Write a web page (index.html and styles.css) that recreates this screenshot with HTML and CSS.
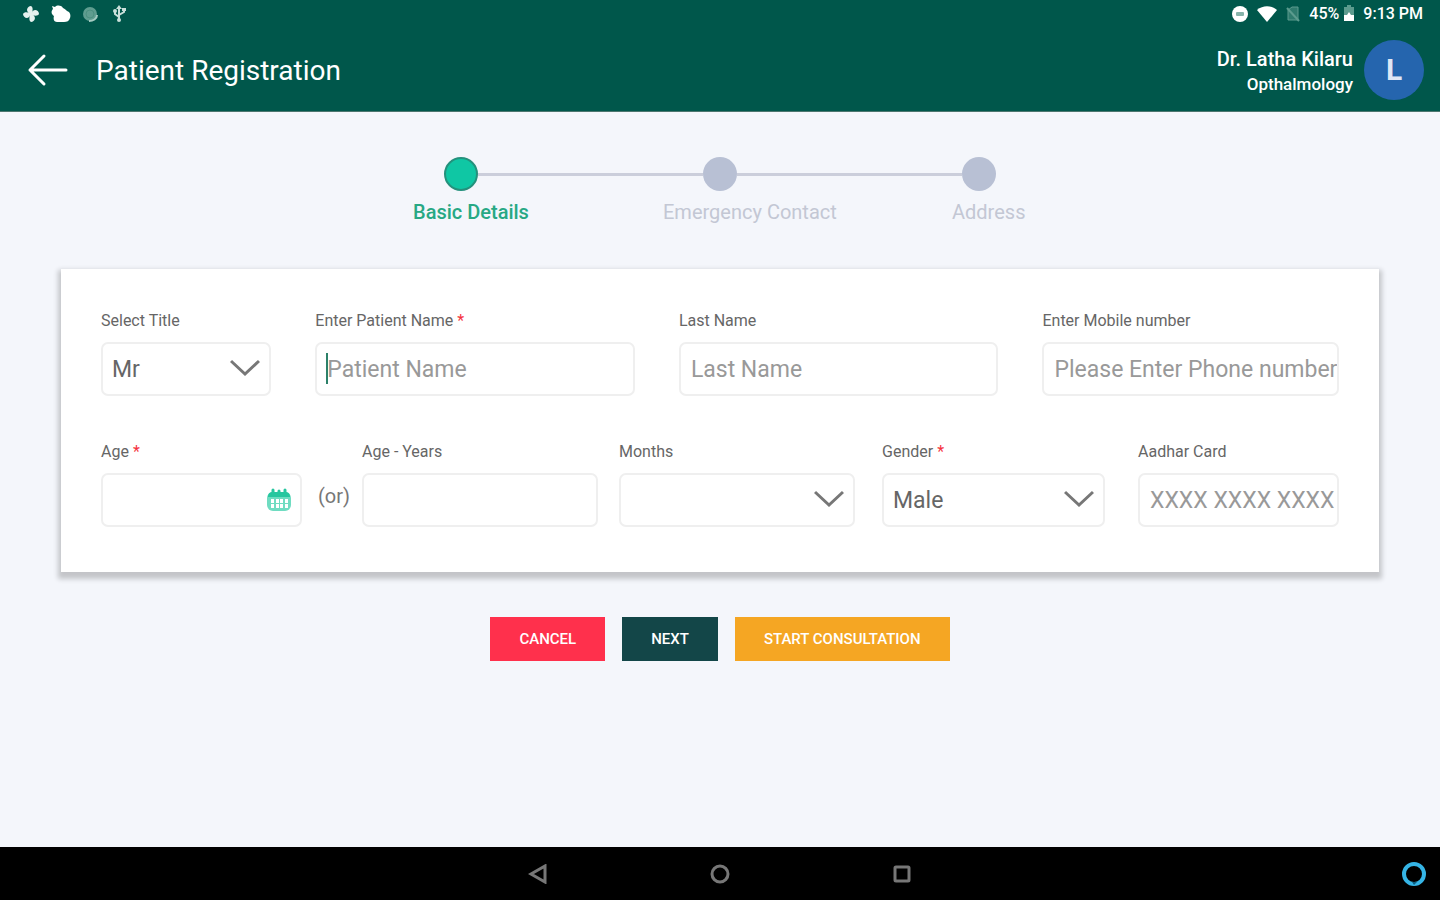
FILE: index.html
```html
<!DOCTYPE html>
<html lang="en">
<head>
    <meta charset="UTF-8">
    <meta name="viewport" content="width=device-width, initial-scale=1.0">
    <title>Patient Registration</title>
    <link rel="stylesheet" href="styles.css">
</head>
<body>
    <header class="header">
        <div class="status-bar">
            <div class="status-left">
                <svg width="18" height="18" viewBox="0 0 18 18" fill="#e6f1ee">
                    <path d="M8 8C3 7 5 1 9 1c2 1 2 4 1 7z M10 8c1-5 7-3 7 1-1 2-4 2-7 1z M10 10c5 1 3 7-1 7-2-1-2-4-1-7z M8 10c-1 5-7 3-7-1 1-2 4-2 7-1z"/>
                    <circle cx="9" cy="9" r="2"/>
                </svg>
                <svg width="20" height="18" viewBox="0 0 20 18" fill="#fff">
                    <path d="M1 1l3 1c2-2 6-2 8 1 2 1 3 2 4 3 3 1 4 4 3 7-1 3-3 4-6 4H6c-3 0-4-3-3-6C0 9 0 6 2 4z"/>
                </svg>
                <svg width="18" height="18" viewBox="0 0 18 18">
                    <circle cx="8" cy="9" r="7" fill="#5f9d90"/>
                    <circle cx="8" cy="9" r="4" fill="none" stroke="#4c9081" stroke-width="1"/>
                    <path d="M15 10c0 4-4 6-8 6" fill="none" stroke="#a5cbc2" stroke-width="2"/>
                </svg>
                <svg width="18" height="18" viewBox="0 0 18 18" fill="none" stroke="#c9dfda" stroke-width="2">
                    <path d="M8 16V3M8 12L4 9V6M8 10l5-3V4"/>
                    <path d="M5 4l3-4 3 4z" fill="#c9dfda" stroke="none"/>
                    <circle cx="8" cy="15" r="2" fill="#c9dfda" stroke="none"/>
                    <circle cx="4" cy="6" r="1"/>
                    <path d="M11 3h4v3h-4z" fill="#c9dfda" stroke="none"/>
                </svg>
            </div>
            <div class="status-right">
                <svg width="18" height="18" viewBox="0 0 18 18">
                    <circle cx="9" cy="9" r="8" fill="#fff"/>
                    <rect x="5" y="7" width="8" height="4" rx="1" fill="#86b3aa"/>
                </svg>
                <svg width="20" height="18" viewBox="0 0 20 18" fill="#fff">
                    <path d="M0 5C6 0 14 0 20 5L10 17z"/>
                </svg>
                <svg width="16" height="18" viewBox="0 0 16 18" fill="none" stroke="#5c9b8e" stroke-width="1">
                    <path d="M3 5l4-3h6v13H3z" fill="#2f7b6e"/>
                    <path d="M2 3l12 13" stroke-width="2"/>
                </svg>
                <div class="battery">
                    <span>45%</span>
                    <svg width="12" height="18" viewBox="0 0 12 18">
                        <path d="M4 0h4v2h3v14H1V2h3z" fill="#5c9b8e"/>
                        <path d="M1 10h3l2-3 2 3h3v6H1z" fill="#fff"/>
                    </svg>
                </div>
                <span>9:13 PM</span>
            </div>
        </div>
        <div class="app-bar">
            <a href="#" class="back" aria-label="Back">
                <svg width="42" height="34" viewBox="0 0 42 34" fill="none" stroke="#fff" stroke-width="3" stroke-linecap="round" stroke-linejoin="round">
                    <path d="M39 17H3M17 3L3 17l14 14"/>
                </svg>
            </a>
            <h1 class="page-title">Patient Registration</h1>
            <div class="doctor">
                <div class="doctor-name">Dr. Latha Kilaru</div>
                <div class="doctor-dept">Opthalmology</div>
            </div>
            <div class="avatar">L</div>
        </div>
    </header>

    <main class="main">
        <div class="stepper">
            <div class="step-track">
                <span class="step-dot active"></span>
                <span class="step-line"></span>
                <span class="step-dot"></span>
                <span class="step-line"></span>
                <span class="step-dot"></span>
            </div>
            <div class="step-labels">
                <span class="step-label active">Basic Details</span>
                <span class="step-label">Emergency Contact</span>
                <span class="step-label">Address</span>
            </div>
        </div>

        <form id="patient-form" class="card">
            <div class="row row-names">
                <div class="field">
                    <label for="title">Select Title</label>
                    <div class="control">
                        <select id="title"><option>Mr</option><option>Mrs</option><option>Ms</option></select>
                        <svg class="chevron" width="30" height="18" viewBox="0 0 30 18"><path d="M1 2l14 13L29 2"/></svg>
                    </div>
                </div>
                <div class="field">
                    <label for="first-name">Enter Patient Name <span class="required">*</span></label>
                    <div class="control">
                        <input id="first-name" type="text" placeholder="Patient Name">
                        <span class="caret"></span>
                    </div>
                </div>
                <div class="field">
                    <label for="last-name">Last Name</label>
                    <div class="control">
                        <input id="last-name" type="text" placeholder="Last Name">
                    </div>
                </div>
                <div class="field">
                    <label for="mobile">Enter Mobile number</label>
                    <div class="control">
                        <input id="mobile" class="tight" type="tel" placeholder="Please Enter Phone number">
                    </div>
                </div>
            </div>

            <div class="row row-details">
                <div class="field field-age">
                    <label for="age">Age <span class="required">*</span></label>
                    <div class="control">
                        <input id="age" type="text">
                        <button type="button" class="calendar" aria-label="Pick a date">
                            <svg width="26" height="24" viewBox="0 0 26 24">
                                <rect x="1" y="4" width="24" height="19" rx="6" fill="#6fdcc1"/>
                                <path d="M2 9c0-4 2-5 5-5h12c3 0 5 1 5 5z" fill="#27c69f"/>
                                <path d="M7 2v4M13 3v3M19 2v4" stroke="#27c69f" stroke-width="3" stroke-linecap="round"/>
                                <path d="M5 11h3v4H5zM10 11h3v4h-3zM14 11h3v4h-3zM19 11h3v4h-3zM5 16h3v4H5zM10 16h3v4h-3zM14 16h3v4h-3zM19 16h3v4h-3z" fill="#fff"/>
                            </svg>
                        </button>
                    </div>
                </div>
                <span class="or">(or)</span>
                <div class="field field-years">
                    <label for="years">Age - Years</label>
                    <div class="control">
                        <input id="years" type="text">
                    </div>
                </div>
                <div class="field field-months">
                    <label for="months">Months</label>
                    <div class="control">
                        <select id="months"><option></option><option>1</option><option>2</option><option>3</option></select>
                        <svg class="chevron" width="30" height="18" viewBox="0 0 30 18"><path d="M1 2l14 13L29 2"/></svg>
                    </div>
                </div>
                <div class="field field-gender">
                    <label for="gender">Gender <span class="required">*</span></label>
                    <div class="control">
                        <select id="gender"><option>Male</option><option>Female</option></select>
                        <svg class="chevron" width="30" height="18" viewBox="0 0 30 18"><path d="M1 2l14 13L29 2"/></svg>
                    </div>
                </div>
                <div class="field field-aadhar">
                    <label for="aadhar">Aadhar Card</label>
                    <div class="control">
                        <input id="aadhar" class="tight" type="text" placeholder="XXXX XXXX XXXX">
                    </div>
                </div>
            </div>
        </form>

        <div class="actions">
            <button type="button" class="btn btn-cancel">CANCEL</button>
            <button type="submit" form="patient-form" class="btn btn-next">NEXT</button>
            <button type="button" class="btn btn-start">START CONSULTATION</button>
        </div>
    </main>

    <footer class="nav-bar">
        <span></span>
        <div class="nav-keys">
            <button type="button" aria-label="Back">
                <svg width="20" height="20" viewBox="0 0 20 20"><path d="M17 2v16L3 10z"/></svg>
            </button>
            <button type="button" aria-label="Home">
                <svg width="20" height="20" viewBox="0 0 20 20"><circle cx="10" cy="10" r="8"/></svg>
            </button>
            <button type="button" aria-label="Recent apps">
                <svg width="20" height="20" viewBox="0 0 20 20"><rect x="3" y="3" width="14" height="14" rx="1"/></svg>
            </button>
        </div>
        <button type="button" class="assistant" aria-label="Assistant">
            <svg width="28" height="28" viewBox="0 0 28 28">
                <circle cx="14" cy="14" r="10" fill="none" stroke="#35b4e5" stroke-width="4"/>
                <path d="M12 22h5l-3 3z" fill="#0b5f83"/>
            </svg>
        </button>
    </footer>
</body>
</html>
```
FILE: styles.css
```css
* {
    margin: 0;
    padding: 0;
    box-sizing: border-box;
}

body {
    font-family: Roboto, "Liberation Sans", sans-serif;
    color: #666;
    background: #f4f6fb;
    min-height: 100vh;
    display: flex;
    flex-direction: column;
}

button {
    font-family: inherit;
    border: none;
    background: none;
    cursor: pointer;
}

svg {
    display: block;
}

/* Header */

.header {
    background: #00574b;
    color: #fff;
    border-bottom: 1px solid #4d776f;
}

.status-bar {
    display: flex;
    justify-content: space-between;
    height: 28px;
    padding: 0 17px 0 22px;
    font-size: 16px;
    font-weight: 500;
    line-height: 20px;
}

.status-left,
.status-right,
.battery {
    display: flex;
    align-items: center;
}

.status-left {
    gap: 11px;
}

.status-right {
    gap: 8px;
}

.battery {
    gap: 4px;
}

.app-bar {
    display: flex;
    align-items: center;
    height: 83px;
    padding: 0 16px 0 27px;
}

.page-title {
    margin-left: 27px;
    padding-top: 2px;
    font-size: 28px;
    font-weight: 400;
    line-height: 32px;
}

.doctor {
    margin-left: auto;
    padding-top: 2px;
    text-align: right;
    font-weight: 500;
}

.doctor-name {
    font-size: 20px;
    line-height: 26px;
}

.doctor-dept {
    font-size: 17px;
    line-height: 24px;
}

.avatar {
    width: 60px;
    height: 60px;
    margin-left: 11px;
    border-radius: 50%;
    background: #2565ae;
    color: #dfe6f5;
    font-size: 30px;
    font-weight: 700;
    line-height: 60px;
    text-align: center;
}

/* Stepper */

.main {
    flex: 1;
    padding: 45px 61px 40px;
}

.stepper {
    width: 614px;
    margin: 0 auto;
}

.step-track {
    display: flex;
    align-items: center;
    padding: 0 31px;
}

.step-dot {
    width: 34px;
    height: 34px;
    border-radius: 50%;
    background: #b8c0d4;
}

.step-dot.active {
    background: #0fc7a4;
    border: 2px solid #24917c;
}

.step-line {
    flex: 1;
    height: 3px;
    background: #cbcedb;
}

.step-labels {
    display: grid;
    grid-template-columns: 250px 289px auto;
    margin-top: 9px;
}

.step-label {
    color: #c3c7d4;
    font-size: 20px;
    line-height: 24px;
    white-space: nowrap;
}

.step-label.active {
    color: #27a884;
    font-weight: 500;
}

/* Form card */

.card {
    margin-top: 45px;
    padding: 42px 40px 45px;
    background: #fff;
    box-shadow: 0 4px 5px 3px rgba(0, 0, 0, 0.2);
}

.row-names {
    display: grid;
    grid-template-columns: 170fr 319fr 319fr 296fr;
    column-gap: 44px;
}

.row-details {
    display: flex;
    align-items: flex-end;
    margin-top: 46px;
}

.field {
    min-width: 0;
}

.field label {
    display: block;
    margin-bottom: 11px;
    font-size: 16px;
    line-height: 20px;
    white-space: nowrap;
}

.required {
    color: #f5333f;
}

.field-age,
.field-aadhar {
    flex: 201 1 0;
}

.field-years,
.field-months {
    flex: 236 1 0;
}

.field-gender {
    flex: 223 1 0;
    margin-left: 27px;
}

.field-months {
    margin-left: 21px;
}

.field-aadhar {
    margin-left: 33px;
}

.or {
    width: 60px;
    padding-left: 4px;
    color: #777;
    font-size: 20px;
    line-height: 62px;
    text-align: center;
}

.control {
    position: relative;
}

.control input,
.control select {
    display: block;
    width: 100%;
    height: 54px;
    padding: 0 10px;
    border: 2px solid #efefef;
    border-radius: 7px;
    background: #fff;
    color: #666;
    font-family: inherit;
    font-size: 23px;
    appearance: none;
}

.control input.tight {
    padding-right: 0;
}

.control select {
    padding: 0 9px;
}

.control input::placeholder {
    color: #999;
}

.chevron {
    position: absolute;
    top: 17px;
    right: 11px;
    fill: none;
    stroke: #777;
    stroke-width: 3;
    pointer-events: none;
}

.caret {
    position: absolute;
    top: 11px;
    left: 11px;
    width: 2px;
    height: 31px;
    background: #2c8169;
}

.calendar {
    position: absolute;
    top: 15px;
    right: 10px;
}

/* Actions */

.actions {
    display: flex;
    justify-content: center;
    gap: 17px;
    margin-top: 45px;
}

.btn {
    height: 44px;
    padding: 0 29px;
    color: #fff;
    font-size: 15px;
    font-weight: 500;
}

.btn-cancel {
    background: #ff304c;
}

.btn-next {
    background: #134648;
}

.btn-start {
    background: #f5a623;
}

/* Navigation bar */

.nav-bar {
    display: grid;
    grid-template-columns: 1fr auto 1fr;
    align-items: center;
    height: 53px;
    padding: 0 12px;
    background: #000;
}

.nav-keys {
    display: flex;
    gap: 162px;
}

.nav-keys svg {
    fill: none;
    stroke: #777;
    stroke-width: 3;
}

.assistant {
    justify-self: end;
}
```
